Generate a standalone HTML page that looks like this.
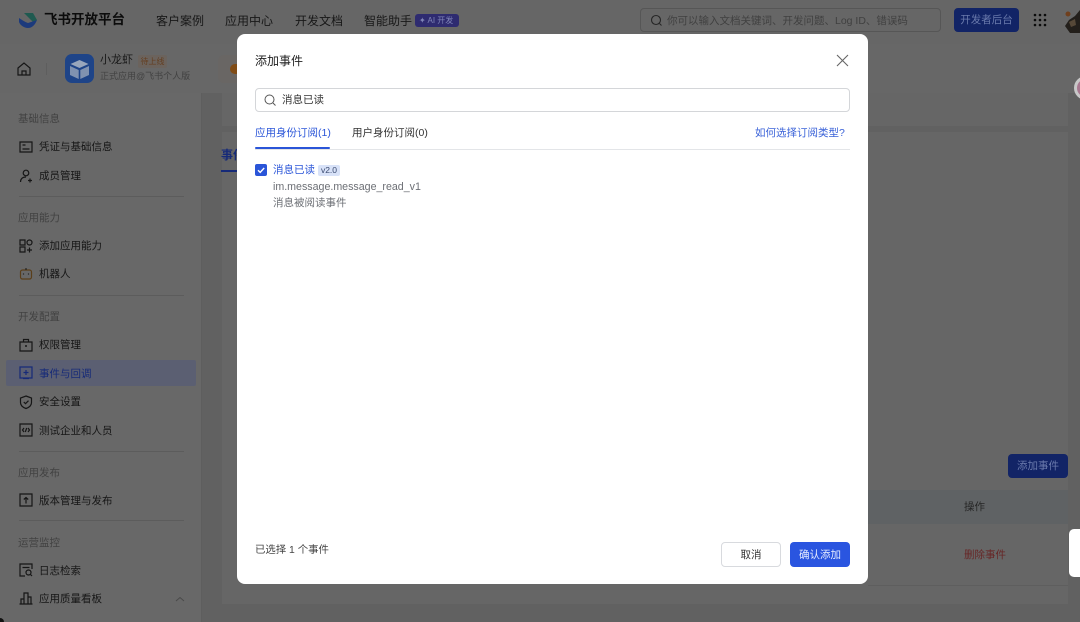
<!DOCTYPE html>
<html lang="zh"><head><meta charset="utf-8"><title>添加事件</title>
<style>
*{box-sizing:border-box;margin:0;padding:0}
html,body{width:1080px;height:622px;overflow:hidden;background:#626262}
body{position:relative;font-family:"Liberation Sans","Noto Sans CJK SC",sans-serif;color:#1f2329}
#p{position:absolute;left:0;top:0;width:1080px;height:622px;filter:blur(.35px)}
.a{position:absolute;white-space:nowrap;line-height:1.2}
svg{position:absolute;overflow:visible}
.side{font-size:10.5px;color:#161616}
.h{font-size:10.5px;color:#424242}
.line{position:absolute;height:1px;background:#5c5c5c;left:19px;width:165px}
.i{fill:none;stroke:#161616;stroke-width:1.2}
</style></head><body><div id="p">
<!-- backgrounds -->
<div class="a" style="left:0;top:0;width:1080px;height:44px;background:#666"></div>
<div class="a" style="left:0;top:44px;width:1080px;height:49px;background:#676767"></div>
<div class="a" style="left:0;top:93px;width:202px;height:529px;background:#686868;border-right:1px solid #5e5e5e"></div>
<div class="a" style="left:202px;top:93px;width:878px;height:529px;background:#616161"></div>
<div class="a" style="left:222px;top:93px;width:846px;height:33px;background:#666"></div>
<div class="a" style="left:222px;top:132px;width:846px;height:472px;background:#666"></div>
<div class="a" style="left:0;top:618px;width:4px;height:4px;background:#111;border-radius:0 4px 0 0"></div>
<!-- top nav -->
<svg style="left:19px;top:12px" width="20" height="17" viewBox="0 0 20 17"><path d="M5 1h9l4 7-4 2z" fill="#1f5a50"/><path d="M0 6c3 2 6 4 9 5l9-3c-2 5-5 8-9 8-4 0-8-3-9-6z" fill="#1c3a7c"/></svg>
<div class="a" style="left:44px;top:12px;font-size:13.5px;font-weight:700;color:#0c0c0c">飞书开放平台</div>
<div class="a" style="left:156px;top:14px;font-size:12px;color:#181818">客户案例</div>
<div class="a" style="left:225px;top:14px;font-size:12px;color:#181818">应用中心</div>
<div class="a" style="left:295px;top:14px;font-size:12px;color:#181818">开发文档</div>
<div class="a" style="left:364px;top:14px;font-size:12px;color:#181818">智能助手</div>
<div class="a" style="left:415px;top:14px;width:44px;height:13px;background:#2e2b70;border-radius:3px;font-size:8px;line-height:13px;color:#8085b8;padding-left:4px">✦ AI 开发</div>
<div class="a" style="left:640px;top:8px;width:301px;height:24px;border:1px solid #565656;border-radius:4px"></div>
<svg style="left:650px;top:14px" width="13" height="13" viewBox="0 0 13 13"><circle cx="6" cy="6" r="4.500" fill="none" stroke="#262626" stroke-width="1.100"/><path d="M9.500 9.500l2 2" stroke="#262626" stroke-width="1.100"/></svg>
<div class="a" style="left:667px;top:15px;font-size:10.5px;color:#404040">你可以输入文档关键词、开发问题、Log ID、错误码</div>
<div class="a" style="left:954px;top:8px;width:65px;height:24px;background:#122466;border-radius:4px;font-size:10.5px;line-height:25px;text-align:center;color:#6a7aac">开发者后台</div>
<svg style="left:1033px;top:13px" width="15" height="15" fill="#0c0c0c"><circle cx="2" cy="2" r="1.300"/><circle cx="7" cy="2" r="1.300"/><circle cx="12" cy="2" r="1.300"/><circle cx="2" cy="7" r="1.300"/><circle cx="7" cy="7" r="1.300"/><circle cx="12" cy="7" r="1.300"/><circle cx="2" cy="12" r="1.300"/><circle cx="7" cy="12" r="1.300"/><circle cx="12" cy="12" r="1.300"/></svg>
<svg style="left:1062px;top:9px" width="18" height="24"><path d="M18 1l-5 6-6 4-4 6 5 7 10 0z" fill="#231f1b"/><circle cx="6" cy="5" r="2.500" fill="#70401e"/><path d="M7 13l6-3 1 6-5 2z" fill="#564838"/></svg>
<!-- app bar -->
<svg style="left:16px;top:61px" width="16" height="16" viewBox="0 0 16 16"><path class="i" d="M2 7l6-5 6 5v7H2zM6 14v-4h4v4"/></svg>
<div class="a" style="left:46px;top:63px;width:1px;height:12px;background:#5e5e5e"></div>
<div class="a" style="left:65px;top:54px;width:29px;height:29px;border-radius:7px;background:#1e4488"></div>
<svg style="left:68px;top:59px" width="23" height="21" viewBox="0 0 23 21"><path d="M11.500 1l9 4-9 4-9-4z" fill="#98a6bc"/><path d="M2 7l8.700 4v9L2 16zM21 7l-8.700 4v9L21 16z" fill="#8092b0"/></svg>
<div class="a" style="left:100px;top:54px;font-size:11px;color:#181818">小龙虾</div>
<div class="a" style="left:138px;top:55px;height:13px;width:29px;background:#6b635d;border-radius:2px;font-size:8px;line-height:13px;text-align:center;color:#643e20">待上线</div>
<div class="a" style="left:100px;top:71px;font-size:9px;color:#424242">正式应用@飞书个人版</div>
<div class="a" style="left:218px;top:55px;width:19px;height:28px;background:#696664;border-radius:6px 0 0 6px"></div>
<div class="a" style="left:230px;top:64px;width:7px;height:10px;background:#804c16;border-radius:5px 0 0 5px"></div>
<!-- sidebar -->
<div class="a h" style="left:18px;top:113px">基础信息</div>
<svg style="left:19px;top:140px" width="14" height="14" viewBox="0 0 14 14"><path class="i" d="M1 2h12v10H1zM3.500 5h3M3.500 9h7"/></svg>
<div class="a side" style="left:39px;top:141px">凭证与基础信息</div>
<svg style="left:19px;top:169px" width="14" height="14" viewBox="0 0 14 14"><circle class="i" cx="7" cy="4" r="2.800"/><path class="i" d="M1.500 13c0-3 2-5 5.500-5M9 11.500h4M11 9.500v4"/></svg>
<div class="a side" style="left:39px;top:170px">成员管理</div>
<div class="line" style="top:196px"></div>
<div class="a h" style="left:18px;top:212px">应用能力</div>
<svg style="left:19px;top:239px" width="14" height="14" viewBox="0 0 14 14"><path class="i" d="M1 1h5v5H1zM1 8h5v5H1zM8 11h5M10.500 8.500v5"/><circle class="i" cx="10.500" cy="3.500" r="2.500"/></svg>
<div class="a side" style="left:39px;top:240px">添加应用能力</div>
<svg style="left:19px;top:267px" width="14" height="14" viewBox="0 0 14 14"><rect x="1.500" y="3" width="11" height="9" rx="2" fill="none" stroke="#5a3e1a" stroke-width="1.200"/><path d="M7 3V1" stroke="#161616"/><path d="M4.500 6.500v1M9.500 6.500v1" stroke="#161616" stroke-width="1.200"/></svg>
<div class="a side" style="left:39px;top:268px">机器人</div>
<div class="line" style="top:295px"></div>
<div class="a h" style="left:18px;top:311px">开发配置</div>
<svg style="left:19px;top:338px" width="14" height="14" viewBox="0 0 14 14"><path class="i" d="M1 4h12v9H1zM4.500 4V1.500h5V4"/><circle cx="7" cy="8" r="1" fill="#161616"/></svg>
<div class="a side" style="left:39px;top:339px">权限管理</div>
<div class="a" style="left:6px;top:360px;width:190px;height:26px;background:#5b5f72;border-radius:2px"></div>
<svg style="left:19px;top:366px" width="14" height="14" viewBox="0 0 14 14"><path d="M1 1h12v11H1zM4.500 6.500h5M7 4v5M4 12.500h6" fill="none" stroke="#162a78" stroke-width="1.200"/></svg>
<div class="a side" style="left:39px;top:368px;color:#162a78">事件与回调</div>
<svg style="left:19px;top:395px" width="14" height="14" viewBox="0 0 14 14"><path class="i" d="M7 1l5.500 2v4.500c0 3-2.500 5-5.500 6-3-1-5.500-3-5.500-6V3zM4.800 7l1.700 1.700 3-3"/></svg>
<div class="a side" style="left:39px;top:396px">安全设置</div>
<svg style="left:19px;top:423px" width="14" height="14" viewBox="0 0 14 14"><path class="i" d="M1 1h12v12H1zM5 5L3.500 7 5 9M9 5l1.500 2L9 9M7.700 5L6.300 9"/></svg>
<div class="a side" style="left:39px;top:425px">测试企业和人员</div>
<div class="line" style="top:451px"></div>
<div class="a h" style="left:18px;top:467px">应用发布</div>
<svg style="left:19px;top:493px" width="14" height="14" viewBox="0 0 14 14"><path class="i" d="M1 1h12v12H1zM7 10.500V4.500M4.800 6.500L7 4.500l2.200 2"/></svg>
<div class="a side" style="left:39px;top:495px">版本管理与发布</div>
<div class="line" style="top:520px"></div>
<div class="a h" style="left:18px;top:537px">运营监控</div>
<svg style="left:19px;top:563px" width="14" height="14" viewBox="0 0 14 14"><path class="i" d="M13 6V1H1v12h5M3.500 4.500h7"/><circle class="i" cx="9.500" cy="9.500" r="2.500"/><path class="i" d="M11.500 11.500l1.500 1.500"/></svg>
<div class="a side" style="left:39px;top:565px">日志检索</div>
<svg style="left:19px;top:591px" width="14" height="14" viewBox="0 0 14 14"><path class="i" d="M.5 13h13M2 13V8h3v5M5 13V2h4v11M9 13V6h3v7"/></svg>
<div class="a side" style="left:39px;top:593px">应用质量看板</div>
<svg style="left:175px;top:596px" width="10" height="6"><path d="M1 5l4-3.500L9 5" fill="none" stroke="#4a4a4a" stroke-width="1"/></svg>
<!-- behind modal -->
<div class="a" style="left:221px;top:148px;font-size:12px;font-weight:700;color:#162a78">事件</div>
<div class="a" style="left:221px;top:170px;width:16px;height:2px;background:#162a78"></div>
<div class="a" style="left:1008px;top:454px;width:60px;height:24px;background:#122466;border-radius:4px;font-size:10.5px;line-height:25px;text-align:center;color:#6a7aac">添加事件</div>
<div class="a" style="left:868px;top:490px;width:200px;height:34px;background:#5f6264"></div>
<div class="a" style="left:964px;top:501px;font-size:10.5px;color:#262626">操作</div>
<div class="a" style="left:964px;top:549px;font-size:10.5px;color:#662626">删除事件</div>
<div class="a" style="left:868px;top:585px;width:200px;height:1px;background:#5e5e5e"></div>
<div class="a" style="left:1069px;top:529px;width:11px;height:48px;background:#fff;border-radius:5px 0 0 5px"></div>
<div class="a" style="left:1074px;top:76px;width:24px;height:24px;background:#a87890;border:3px solid #c8c8c8;border-radius:50%"></div>
<!-- modal -->
<div class="a" style="left:237px;top:34px;width:631px;height:550px;background:#fff;border-radius:8px"></div>
<div class="a" style="left:255px;top:54px;font-size:12px;color:#222">添加事件</div>
<svg style="left:836px;top:54px" width="13" height="13" viewBox="0 0 13 13"><path d="M1 1l11 11M12 1L1 12" stroke="#666" stroke-width="1.100" fill="none"/></svg>
<div class="a" style="left:255px;top:88px;width:595px;height:24px;border:1px solid #d4d6d9;border-radius:4px"></div>
<svg style="left:264px;top:94px" width="13" height="13" viewBox="0 0 13 13"><circle cx="5.500" cy="5.500" r="4.500" fill="none" stroke="#555" stroke-width="1"/><path d="M9 9l2.500 2.500" stroke="#555" stroke-width="1"/></svg>
<div class="a" style="left:282px;top:94px;font-size:10.5px;color:#333">消息已读</div>
<div class="a" style="left:255px;top:127px;font-size:10.5px;color:#2a55d8">应用身份订阅(1)</div>
<div class="a" style="left:352px;top:127px;font-size:10.5px;color:#333">用户身份订阅(0)</div>
<div class="a" style="left:755px;top:127px;font-size:10.5px;color:#3a62d8">如何选择订阅类型?</div>
<div class="a" style="left:255px;top:149px;width:595px;height:1px;background:#e3e5e8"></div>
<div class="a" style="left:255px;top:147px;width:75px;height:2px;background:#2a55d8;border-radius:1px"></div>
<div class="a" style="left:255px;top:164px;width:12px;height:12px;background:#2a55d8;border-radius:2px"></div>
<svg style="left:255px;top:164px" width="12" height="12"><path d="M3 6.200l2.200 2.200L9.200 4" fill="none" stroke="#fff" stroke-width="1.400"/></svg>
<div class="a" style="left:273px;top:164px;font-size:10.5px;color:#2a55d8">消息已读</div>
<div class="a" style="left:318px;top:165px;width:22px;height:11px;background:#d8e2f8;border-radius:2px;font-size:8.500px;line-height:11px;text-align:center;color:#3a4a70">v2.0</div>
<div class="a" style="left:273px;top:181px;font-size:10.65px;color:#6c6f75">im.message.message_read_v1</div>
<div class="a" style="left:273px;top:197px;font-size:10.5px;color:#6c6f75">消息被阅读事件</div>
<div class="a" style="left:255px;top:545px;font-size:10.4px;color:#444">已选择 1 个事件</div>
<div class="a" style="left:721px;top:542px;width:60px;height:25px;border:1px solid #d8dade;border-radius:4px;background:#fff;font-size:10.5px;line-height:24px;text-align:center;color:#333">取消</div>
<div class="a" style="left:790px;top:542px;width:60px;height:25px;border-radius:4px;background:#2a55e0;font-size:10.5px;line-height:26px;text-align:center;color:#e6ecff">确认添加</div>
</div></body></html>
